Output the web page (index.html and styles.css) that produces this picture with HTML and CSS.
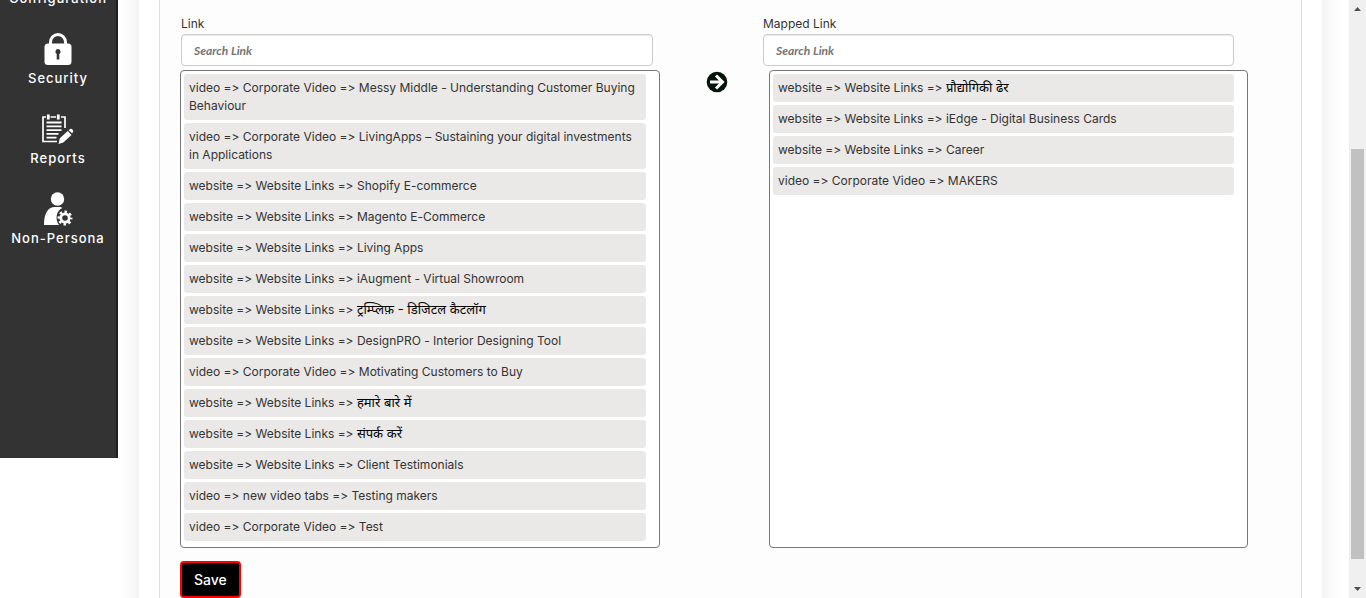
FILE: index.html
```html
<!DOCTYPE html>
<html lang="en">
<head>
<meta charset="utf-8">
<title>Link Mapping</title>
<link rel="stylesheet" href="styles.css">
</head>
<body class="page">
<nav class="sidebar" aria-label="Main">
  <a class="nav-item" href="#"><span class="nav-icon"></span><span>Configuration</span></a>
  <a class="nav-item" href="#">
    <svg class="nav-icon" viewBox="0 0 34 34" aria-hidden="true">
      <path d="M9.500 13V10.500a7.500 8 0 0 1 15 0V13" fill="none" stroke="#fff" stroke-width="3"/>
      <rect x="3.500" y="11.500" width="27" height="21.500" rx="3.500" fill="#fff"/>
      <path d="M17 17a2.700 2.700 0 0 1 1.300 5v5.500h-2.600V22A2.700 2.700 0 0 1 17 17z" fill="#333"/>
    </svg>
    <span>Security</span>
  </a>
  <a class="nav-item" href="#">
    <svg class="nav-icon" viewBox="0 0 34 34" aria-hidden="true">
      <path d="M5 5H2v24.500h14M9.500 5h5.500M20 5h4v11" fill="none" stroke="#fff" stroke-width="1.700"/>
      <path d="M7.300 2.500v5M17.300 2.500v5" stroke="#fff" stroke-width="2.800"/>
      <path d="M5.500 10.500h15M5.500 14.300h15M5.500 18.100h15M5.500 21.900h12M5.500 25.700h10" stroke="#fff" stroke-width="1.800"/>
      <path d="M17.500 32l1.300-5.700 8-7.200 3.700 3.900-8.200 7.500zM27.600 18.200l1.600-1.200q1.200-.5 2.200.5l.6.700q.7 1-.1 2l-.8 1.100z" fill="#fff"/>
    </svg>
    <span>Reports</span>
  </a>
  <a class="nav-item" href="#">
    <svg class="nav-icon" viewBox="0 0 34 34" aria-hidden="true">
      <circle cx="16.500" cy="7" r="6.700" fill="#fff"/>
      <path d="M3 33c0-11 3.500-18 11-18h5.500l2 1c-6 2-8 11-3.500 17z" fill="#fff"/>
      <circle cx="24" cy="26" r="4.200" fill="none" stroke="#fff" stroke-width="2.800"/>
      <circle cx="24" cy="26" r="6.300" fill="none" stroke="#fff" stroke-width="2.400" stroke-dasharray="2.474 2.474" stroke-dashoffset="1.237"/>
    </svg>
    <span>Non-Persona</span>
  </a>
</nav>

<main class="panel">
  <form class="card">
    <div class="mapper">
      <section class="column">
        <label class="label" for="search-link">Link</label>
        <input class="search" id="search-link" type="text" placeholder="Search Link">
        <ul class="list">
          <li class="item">video =&gt; Corporate Video =&gt; Messy Middle - Understanding Customer Buying Behaviour</li>
          <li class="item">video =&gt; Corporate Video =&gt; LivingApps – Sustaining your digital investments in Applications</li>
          <li class="item">website =&gt; Website Links =&gt; Shopify E-commerce</li>
          <li class="item">website =&gt; Website Links =&gt; Magento E-Commerce</li>
          <li class="item">website =&gt; Website Links =&gt; Living Apps</li>
          <li class="item">website =&gt; Website Links =&gt; iAugment - Virtual Showroom</li>
          <li class="item">website =&gt; Website Links =&gt; <span class="hindi" lang="hi">ट्रम्प्लिफ़ - डिजिटल कैटलॉग</span></li>
          <li class="item">website =&gt; Website Links =&gt; DesignPRO - Interior Designing Tool</li>
          <li class="item">video =&gt; Corporate Video =&gt; Motivating Customers to Buy</li>
          <li class="item">website =&gt; Website Links =&gt; <span class="hindi" lang="hi">हमारे बारे में</span></li>
          <li class="item">website =&gt; Website Links =&gt; <span class="hindi" lang="hi">संपर्क करें</span></li>
          <li class="item">website =&gt; Website Links =&gt; Client Testimonials</li>
          <li class="item">video =&gt; new video tabs =&gt; Testing makers</li>
          <li class="item">video =&gt; Corporate Video =&gt; Test</li>
        </ul>
      </section>
      <div class="transfer">
        <button class="move" type="button" aria-label="Move to mapped links">
          <svg class="move-icon" viewBox="0 0 22 22" aria-hidden="true">
            <circle cx="11" cy="11" r="10.300" fill="#03140b"/>
            <path d="M4 11h12M10 4.500l6.500 6.500L10 17.500" fill="none" stroke="#fff" stroke-width="3"/>
          </svg>
        </button>
      </div>
      <section class="column">
        <label class="label label-mapped" for="search-mapped">Mapped Link</label>
        <input class="search search-mapped" id="search-mapped" type="text" placeholder="Search Link">
        <ul class="list list-mapped">
          <li class="item">website =&gt; Website Links =&gt; <span class="hindi" lang="hi">प्रौद्योगिकी ढेर</span></li>
          <li class="item">website =&gt; Website Links =&gt; iEdge - Digital Business Cards</li>
          <li class="item">website =&gt; Website Links =&gt; Career</li>
          <li class="item">video =&gt; Corporate Video =&gt; MAKERS</li>
        </ul>
      </section>
    </div>
    <button class="save" type="button">Save</button>
  </form>
</main>

<div class="scrollbar" aria-hidden="true">
  <svg class="scroll-arrow" viewBox="0 0 17 17"><path d="M5 11h7L8.500 7z" fill="#505050"/></svg>
  <div class="scroll-track"><div class="scroll-thumb"></div></div>
  <svg class="scroll-arrow" viewBox="0 0 17 17"><path d="M5 6h7l-3.500 4z" fill="#505050"/></svg>
</div>
</body>
</html>
```

FILE: styles.css
```css
* { box-sizing: border-box; }

.page {
  display: flex;
  height: 100vh;
  margin: 0;
  overflow: hidden;
  background: #fff;
  color: #333;
  font: 12px/18px Inter, "Noto Sans Devanagari", "Noto Sans", sans-serif;
  font-variant-ligatures: none;
  font-feature-settings: "calt" 0;
}

.sidebar {
  flex: 0 0 118px;
  display: flex;
  flex-direction: column;
  height: calc(100vh - 92px);
  margin-top: -48px;
  overflow: hidden;
  background: #333;
  border-right: 2px solid #1f1f1f;
}

.nav-item {
  flex: 0 0 80px;
  display: flex;
  flex-direction: column;
  align-items: center;
  gap: 2px;
  color: #fff;
  font-size: 13px;
  font-weight: 500;
  letter-spacing: 1px;
  line-height: 20px;
  text-decoration: none;
}

.nav-icon { flex: none; width: 34px; height: 34px; }

.panel {
  flex: 1;
  min-width: 0;
  display: flex;
  margin: -30px 27px -30px 21px;
  padding: 0 20px;
  background: #fff;
  box-shadow: 0 0 20px rgba(0, 0, 0, .1);
}

.card {
  flex: 1;
  min-width: 0;
  padding: 44px 53px 0 20px;
  background: #fdfdfd;
  border: 1px solid #ddd;
}

.mapper {
  display: grid;
  grid-template-columns: 480fr 103fr 485fr;
}

.column { display: flex; flex-direction: column; }

.label { padding: 0 0 1px 1px; }
.label-mapped { padding-left: 0; }

.search {
  height: 32px;
  margin: 0 7px 4px 1px;
  padding: 0 12px;
  border: 1px solid #ccc;
  border-radius: 4px;
  box-shadow: inset 0 1px 1px rgba(0, 0, 0, .08);
  background: #fff;
  font: 12px Inter, sans-serif;
}
.search-mapped { margin-left: 0; margin-right: 14px; }

.search::placeholder {
  color: #757575;
  opacity: 1;
  font: italic 700 12px Lato, sans-serif;
}

.list {
  flex: 1;
  display: flex;
  flex-direction: column;
  gap: 3px;
  margin: 0;
  padding: 3px 13px 6px 3px;
  list-style: none;
  background: #fff;
  border: 1px solid #777;
  border-radius: 4px;
}
.list-mapped { margin-left: 6px; }

.item {
  padding: 5px;
  background: #eae9e7;
  border-radius: 3px;
}

.hindi { color: #000; font-size: 13px; line-height: 1; }

.transfer { padding: 56px 0 0 46px; }

.move {
  display: block;
  padding: 0;
  border: 0;
  background: none;
  cursor: pointer;
}
.move-icon { display: block; width: 22px; height: 22px; }

.save {
  height: 37px;
  margin-top: 13px;
  padding: 0 12px;
  border: 2px solid #f00;
  border-radius: 4px;
  background: #000;
  color: #fff;
  font: 500 14px Inter, sans-serif;
}

.scrollbar {
  flex: 0 0 17px;
  display: flex;
  flex-direction: column;
  background: #f0f0f0;
}
.scroll-arrow { flex: none; width: 17px; height: 17px; }
.scroll-track {
  flex: 1;
  display: flex;
  flex-direction: column;
  justify-content: flex-end;
  padding: 0 2px 22px;
}
.scroll-thumb { height: 75.6%; background: #c1c1c1; }
```
